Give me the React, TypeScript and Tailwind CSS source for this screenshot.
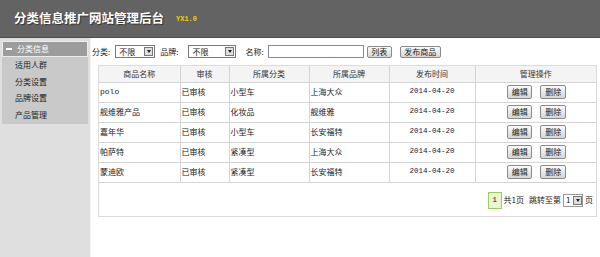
const rows = [
  { name: "polo", status: "已审核", cat: "小型车", brand: "上海大众", date: "2014-04-20" },
  { name: "舰维雅产品", status: "已审核", cat: "化妆品", brand: "舰维雅", date: "2014-04-20" },
  { name: "嘉年华", status: "已审核", cat: "小型车", brand: "长安福特", date: "2014-04-20" },
  { name: "帕萨特", status: "已审核", cat: "紧凑型", brand: "上海大众", date: "2014-04-20" },
  { name: "蒙迪欧", status: "已审核", cat: "紧凑型", brand: "长安福特", date: "2014-04-20" },
];

function Select({ value, w }: { value: string; w: string }) {
  return (
    <div className={`flex h-[13px] shrink-0 items-center border border-[#7a7a7a] bg-white ${w}`}>
      <span className="flex-1 pl-[3px] leading-none">{value}</span>
      <span className="mr-[1px] flex h-[9px] w-[9px] items-center justify-center border border-[#777] bg-[#e0e0e0]">
        <span className="h-0 w-0 border-x-[2.5px] border-t-[3px] border-x-transparent border-t-[#222]" />
      </span>
    </div>
  );
}

function Btn({ label, cls = "" }: { label: string; cls?: string }) {
  return (
    <button
      className={`flex h-[12px] shrink-0 items-center justify-center whitespace-nowrap rounded-[2px] border border-[#8a8a8a] bg-gradient-to-b from-[#fafafa] to-[#d6d6d6] p-0 text-[8px] leading-none text-[#222] ${cls}`}
    >
      {label}
    </button>
  );
}

const mono = { fontFamily: '"Liberation Mono", "DejaVu Sans Mono", monospace' };

export default function App() {
  const font = { fontFamily: '"SimSun", "Noto Sans CJK SC", sans-serif' };
  return (
    <div className="h-[257px] w-[600px] overflow-hidden bg-white text-[8px] text-[#222]" style={font}>
      <header className="flex h-[38px] items-center border-b border-[#4d4d4d] bg-[#636363] pl-[14px]">
        <h1 className="text-[12.5px] font-bold text-white [text-shadow:1px_1px_1px_#333]">
          分类信息推广网站管理后台
        </h1>
        <span className="ml-[12px] mt-[2px] text-[7px] font-bold text-[#f2cf00]" style={mono}>
          YX1.0
        </span>
      </header>
      <div className="flex h-[219px]">
        <aside className="w-[91px] border-r border-[#f4f4f4] bg-[#dfdfdf] px-[2px] pt-[3px]">
          <div className="flex h-[16px] items-center border border-[#ececec] bg-[#9c9c9c] text-white">
            <span className="ml-[3px] mr-[5px] h-[1.5px] w-[6px] bg-white" />
            <span>分类信息</span>
          </div>
          <ul className="flex flex-col bg-[#c9c9c9] pb-[1px] text-[#222]">
            {["适用人群", "分类设置", "品牌设置", "产品管理"].map((t) => (
              <li key={t} className="flex h-[16.5px] items-center pl-[13px]">
                {t}
              </li>
            ))}
          </ul>
        </aside>
        <main className="flex-1 pl-[1px] pt-[7px]">
          <div className="flex h-[13px] items-center whitespace-nowrap">
            <span>分类:</span>
            <Select value="不限" w="ml-[5px] w-[40px]" />
            <span className="ml-[5px]">品牌:</span>
            <Select value="不限" w="ml-[10px] w-[48px]" />
            <span className="ml-[9px]">名称:</span>
            <input className="ml-[4px] h-[13px] w-[96px] shrink-0 border border-[#8a8a8a] bg-white" />
            <Btn label="列表" cls="ml-[3px] w-[25px]" />
            <Btn label="发布商品" cls="ml-[8px] w-[41px]" />
          </div>
          <div className="ml-[6px] mt-[7px] h-[152px] w-[499px] border border-[#dcdcdc]">
            <table className="w-full border-collapse">
              <thead>
                <tr className="h-[16px] bg-[#f4f4f4] text-[#333]">
                  <th className="w-[81px] border-b border-r border-[#d4d4d4] font-normal">商品名称</th>
                  <th className="w-[49px] border-b border-r border-[#d4d4d4] font-normal">审核</th>
                  <th className="w-[80px] border-b border-r border-[#d4d4d4] font-normal">所属分类</th>
                  <th className="w-[80px] border-b border-r border-[#d4d4d4] font-normal">所属品牌</th>
                  <th className="w-[86px] border-b border-r border-[#d4d4d4] font-normal">发布时间</th>
                  <th className="border-b border-[#d4d4d4] font-normal">管理操作</th>
                </tr>
              </thead>
              <tbody>
                {rows.map((r) => (
                  <tr key={r.name} className="h-[20px]">
                    <td className="border-b border-r border-[#d4d4d4] pl-[1px]" style={r.name === "polo" ? mono : undefined}>
                      {r.name}
                    </td>
                    <td className="border-b border-r border-[#d4d4d4] pl-[1px]">{r.status}</td>
                    <td className="border-b border-r border-[#d4d4d4] pl-[1px]">{r.cat}</td>
                    <td className="border-b border-r border-[#d4d4d4] pl-[1px]">{r.brand}</td>
                    <td className="border-b border-r border-[#d4d4d4] text-center text-[7.5px]" style={mono}>
                      {r.date}
                    </td>
                    <td className="border-b border-[#d4d4d4]">
                      <div className="flex justify-center gap-[8px] pl-[2px]">
                        <Btn label="编辑" cls="h-[14px] w-[25px]" />
                        <Btn label="删除" cls="h-[14px] w-[26px]" />
                      </div>
                    </td>
                  </tr>
                ))}
              </tbody>
            </table>
            <div className="mt-[9px] flex items-center justify-end pr-[3px]">
              <span className="flex h-[17px] w-[14px] items-center justify-center border border-[#99cc66] bg-[#eaf5d5]" style={mono}>
                1
              </span>
              <span className="ml-[2px]">共1页</span>
              <span className="ml-[5px]">跳转至第</span>
              <div className="ml-[2px] flex h-[13px] w-[20px] items-center border border-[#999] bg-white">
                <span className="flex-1 pl-[2px] leading-none">1</span>
                <span className="flex h-[9px] w-[9px] items-center justify-center border border-[#777] bg-[#e0e0e0]">
                  <span className="h-0 w-0 border-x-[2.5px] border-t-[3px] border-x-transparent border-t-[#222]" />
                </span>
              </div>
              <span className="ml-[2px]">页</span>
            </div>
          </div>
        </main>
      </div>
    </div>
  );
}
